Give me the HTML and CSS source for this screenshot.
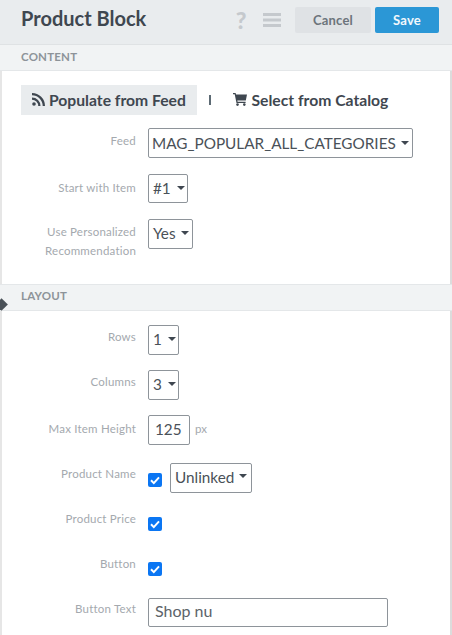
FILE: index.html
```html
<!DOCTYPE html>
<html lang="en">
<head>
<meta charset="utf-8">
<title>Product Block</title>
<link rel="stylesheet" href="styles.css">
</head>
<body>
<div class="panel">
  <header class="topbar">
    <h1 class="title">Product Block</h1>
    <div class="actions">
      <span class="help">?</span>
      <svg class="menu" width="18" height="14" viewBox="0 0 18 14"><path d="M0 0h18v3H0zM0 5.500h18v3H0zM0 11h18v3H0z"/></svg>
      <span class="btn btn-cancel">Cancel</span>
      <span class="btn btn-save">Save</span>
    </div>
  </header>
  <div class="bar bar-content">CONTENT</div>
  <div class="tabs">
    <span class="tab tab-active">
      <svg class="tab-icon" width="13" height="13" viewBox="0 0 13 13"><circle cx="2" cy="11" r="1.800"/><path d="M0 4.500a8.500 8.500 0 0 1 8.500 8.500H6.200A6.200 6.200 0 0 0 0 6.800zM0 0a13 13 0 0 1 13 13h-2.300A10.700 10.700 0 0 0 0 2.300z"/></svg>
      Populate from Feed
    </span>
    <span class="sep"></span>
    <span class="tab">
      <svg class="tab-icon" width="14" height="13" viewBox="0 0 14 13"><path d="M0 0h2.600l.4 1.500H14l-1.200 6H4.300l.3 1.300h8v1.300H3.500L1.700 1.300H0z"/><circle cx="4.500" cy="11.600" r="1.300"/><circle cx="11.300" cy="11.600" r="1.300"/></svg>
      Select from Catalog
    </span>
  </div>
  <div class="form form-content">
    <div class="row row-feed">
      <label class="label">Feed</label>
      <span class="field select select-feed">MAG_POPULAR_ALL_CATEGORIES<i class="caret"></i></span>
    </div>
    <div class="row row-start">
      <label class="label">Start with Item</label>
      <span class="field select">#1<i class="caret caret-wide"></i></span>
    </div>
    <div class="row row-rec">
      <label class="label label-two">Use Personalized<br>Recommendation</label>
      <span class="field select">Yes<i class="caret"></i></span>
    </div>
  </div>
  <div class="bar-wrap">
    <div class="bar bar-layout">LAYOUT</div>
    <i class="marker"></i>
  </div>
  <div class="form form-layout">
    <div class="row row-rows">
      <label class="label">Rows</label>
      <span class="field select">1<i class="caret caret-wide"></i></span>
    </div>
    <div class="row row-cols">
      <label class="label">Columns</label>
      <span class="field select">3<i class="caret caret-wide"></i></span>
    </div>
    <div class="row row-height">
      <label class="label">Max Item Height</label>
      <span class="field number">125</span>
      <span class="unit">px</span>
    </div>
    <div class="row row-name">
      <label class="label">Product Name</label>
      <span class="check"><svg width="14" height="14" viewBox="0 0 14 14"><path d="M3 7.300l2.800 2.800L11 4.400"/></svg></span>
      <span class="field select select-link">Unlinked<i class="caret"></i></span>
    </div>
    <div class="row row-price">
      <label class="label">Product Price</label>
      <span class="check"><svg width="14" height="14" viewBox="0 0 14 14"><path d="M3 7.300l2.800 2.800L11 4.400"/></svg></span>
    </div>
    <div class="row row-button">
      <label class="label">Button</label>
      <span class="check"><svg width="14" height="14" viewBox="0 0 14 14"><path d="M3 7.300l2.800 2.800L11 4.400"/></svg></span>
    </div>
    <div class="row row-text">
      <label class="label">Button Text</label>
      <span class="field text">Shop nu</span>
    </div>
  </div>
</div>
</body>
</html>
```
FILE: styles.css
```css
* { box-sizing: border-box; }
html, body { margin: 0; height: 100%; }
body { background: #fff; overflow: hidden; font-family: Lato, "Open Sans", sans-serif; color: #4a5158; }
.panel { width: 452px; height: 635px; border-left: 2px solid #e6e6e6; border-right: 2px solid #dcdcdc; background: #fff; }
.topbar { height: 45px; margin-left: -2px; margin-right: -2px; padding: 7px 13px 0 21px; background: #e9ecee; border-bottom: 1px solid #dfe2e4; display: flex; justify-content: space-between; align-items: flex-start; }
.title { margin: -1px 0 0; font-size: 20px; font-weight: 700; line-height: 24px; color: #3f4750; }
.actions { display: flex; align-items: center; height: 26px; }
.help { font-size: 23px; font-weight: 900; color: #c5c9cd; margin-right: 16px; width: 12px; text-align: center; }
.menu { fill: #c5c9cd; margin-right: 14px; }
.btn { height: 26px; border-radius: 2px; display: flex; align-items: center; justify-content: center; font-size: 13px; font-weight: 700; letter-spacing: .2px; }
.btn-cancel { width: 76px; background: #dfe2e5; color: #6c747b; margin-right: 4px; }
.btn-save { width: 64px; background: #2b97d6; color: #f2f8fc; }
.bar { height: 26px; margin-left: -2px; margin-right: -2px; padding: 0 0 2px 21px; background: #f1f3f4; border-bottom: 1px solid #e4e7e9; font-size: 11.500px; font-weight: 700; letter-spacing: .2px; color: #8d9399; display: flex; align-items: center; }
.tabs { display: flex; align-items: center; height: 30px; margin-top: 14px; margin-left: 19px; font-size: 15.700px; font-weight: 700; color: #3f4750; white-space: nowrap; }
.tab { height: 30px; display: flex; align-items: center; gap: 4px; padding: 0 0 1px 11px; }
.tab-active { width: 176px; background: #e9ecee; }
.tab-icon { fill: #3f4750; flex: none; }
.sep { width: 1.500px; height: 10px; background: #5d6a74; margin: 0 22px 0 12px; }
.tab:last-child { padding-left: 0; gap: 5px; }
.row { display: flex; align-items: flex-start; margin-left: -2px; }
.label { width: 136px; margin-right: 12px; text-align: right; font-size: 11.500px; letter-spacing: .2px; color: #a4a9ae; line-height: 19px; flex: none; }
.label-two { line-height: 19px; }
.field { display: inline-flex; align-items: center; height: 29px; background: #fff; border: 1px solid #8e949a; border-radius: 2px; font-size: 15.300px; color: #4a5158; padding: 0 0 2px 4px; }
.select { padding-right: 4px; }
.caret { display: inline-block; width: 0; height: 0; margin-left: 5px; border-left: 4.500px solid transparent; border-right: 4.500px solid transparent; border-top: 4.500px solid #3f4750; }
.caret-wide { margin-left: 6px; }
.form-content { margin-top: 13px; }
.row-feed { height: 46px; }
.row-feed .label { margin-top: 3px; }
.select-feed { width: 265px; height: 30px; padding-left: 3px; padding-bottom: 0; }
.row-start { height: 45px; }
.row-start .label { margin-top: 4px; }
.row-start .select { width: 40px; }
.row-rec { height: 65px; }
.row-rec .label { margin-top: 3px; }
.row-rec .select { width: 45px; height: 30px; }
.bar-wrap { position: relative; }
.bar-layout { height: 27px; padding-bottom: 5px; border-top: 1px solid #e4e7e9; }
.marker { position: absolute; left: -5px; top: 16px; width: 9px; height: 9px; background: #4a5158; transform: rotate(45deg); }
.form-layout { margin-top: 14px; }
.row-rows { height: 45px; }
.row-rows .label, .row-cols .label { margin-top: 2px; }
.row-rows .select, .row-cols .select { width: 31px; height: 30px; padding-left: 4px; }
.row-cols { height: 45px; }
.row-height { height: 45px; }
.row-height .label { margin-top: 4px; }
.number { width: 42px; height: 30px; padding-left: 6px; }
.unit { font-size: 11.500px; color: #a4a9ae; margin: 7px 0 0 5px; }
.row-name { height: 45px; }
.row-name .label { margin-top: 4px; }
.check { width: 14px; height: 14px; margin-top: 13px; margin-right: 8px; border-radius: 2px; background: #0b76f3; flex: none; display: block; }
.check svg { display: block; fill: none; stroke: #fff; stroke-width: 2; }
.select-link { width: 82px; height: 30px; margin-top: 3px; }
.select-link .caret { margin-bottom: 3px; }
.row-price { height: 45px; }
.row-price .label { margin-top: 4px; }
.row-price .check, .row-button .check { margin-top: 12px; }
.row-button { height: 45px; }
.row-button .label { margin-top: 4px; }
.row-text .label { margin-top: 4px; }
.text { width: 240px; height: 29px; padding: 0 0 4px 6px; margin-top: 3px; font-size: 16px; color: #5c6369; }
```
